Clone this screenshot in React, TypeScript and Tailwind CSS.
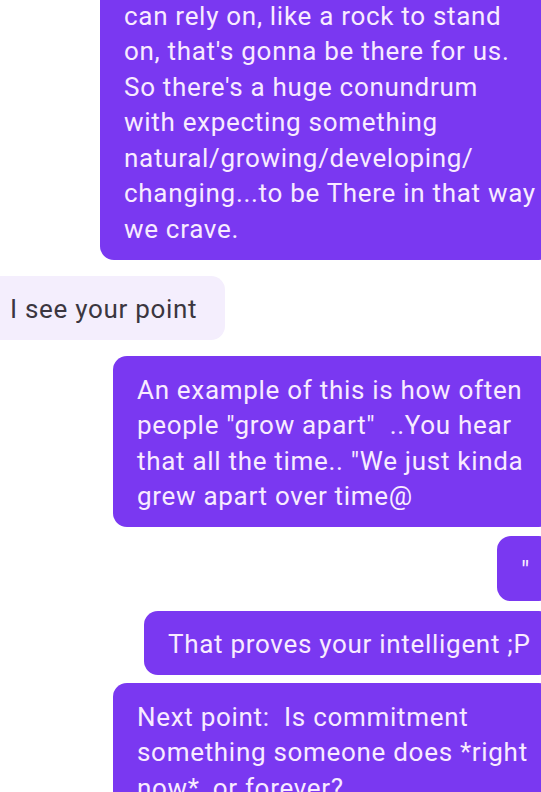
type Msg = {
  from: 'me' | 'them';
  lines: string[];
  width: string;
  gap: string;
};

const messages: Msg[] = [
  {
    from: 'me',
    width: 'w-[453px]',
    gap: 'mt-[-18px]',
    lines: [
      'can rely on, like a rock to stand',
      "on, that's gonna be there for us.",
      "So there's a huge conundrum",
      'with expecting something',
      'natural/growing/developing/',
      'changing...to be There in that way',
      'we crave.',
    ],
  },
  { from: 'them', width: 'w-[239px]', gap: 'mt-[16px]', lines: ['I see your point'] },
  {
    from: 'me',
    width: 'w-[440px]',
    gap: 'mt-[16px]',
    lines: [
      'An example of this is how often',
      'people "grow apart"  ..You hear',
      'that all the time.. "We just kinda',
      'grew apart over time@',
    ],
  },
  { from: 'me', width: 'w-[56px]', gap: 'mt-[9px]', lines: ['"'] },
  { from: 'me', width: 'w-[409px]', gap: 'mt-[10px]', lines: ['That proves your intelligent ;P'] },
  {
    from: 'me',
    width: 'w-[440px]',
    gap: 'mt-[8px]',
    lines: ['Next point:  Is commitment', 'something someone does *right', 'now*, or forever?'],
  },
];

export default function App() {
  return (
    <div className="w-[541px] h-[792px] overflow-hidden bg-white font-['Roboto',sans-serif]">
      <div className="flex flex-col">
        {messages.map((m, i) =>
          m.from === 'me' ? (
            <div
              key={i}
              className={`${m.gap} ${m.width} self-end mr-[-12px] rounded-[14px] bg-[#7a38f1] px-[24px] pt-[16.5px] pb-[12.5px] text-[26px] leading-[35.5px] tracking-[0.7px] text-[#f8ebff]`}
            >
              {m.lines.map((l, j) => (
                <div key={j} className="whitespace-pre">
                  {l}
                </div>
              ))}
            </div>
          ) : (
            <div
              key={i}
              className={`${m.gap} ${m.width} self-start ml-[-14px] rounded-[14px] bg-[#f4eefd] px-[24px] pt-[16.5px] pb-[12.5px] text-[26px] leading-[35.5px] tracking-[0.7px] text-[#3b3640]`}
            >
              {m.lines.map((l, j) => (
                <div key={j} className="whitespace-pre">
                  {l}
                </div>
              ))}
            </div>
          )
        )}
      </div>
    </div>
  );
}
